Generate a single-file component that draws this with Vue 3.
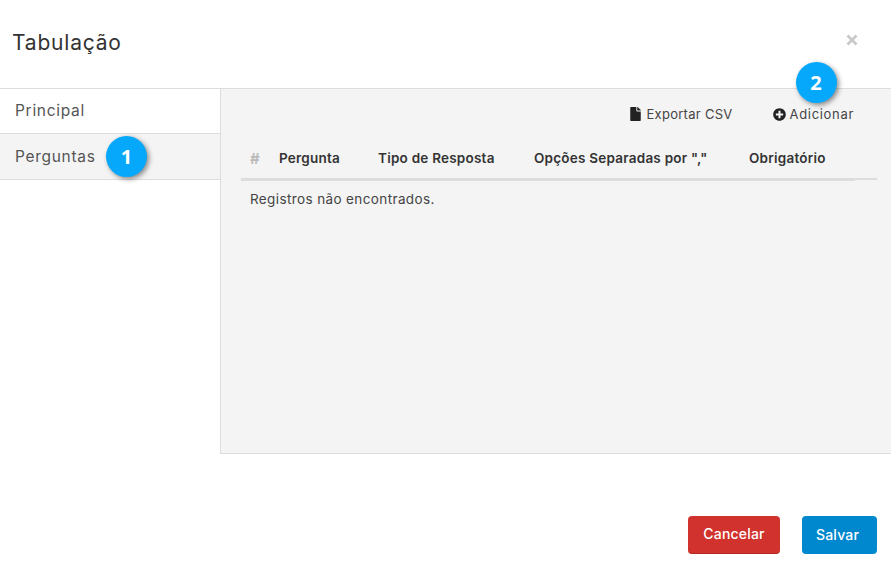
<script setup>
const columns = ['Pergunta', 'Tipo de Resposta', 'Opções Separadas por ","', 'Obrigatório']
</script>

<template>
  <div class="modal">
    <header class="head">
      <h1 class="title">Tabulação</h1>
      <svg class="close" viewBox="0 0 12 12" width="12" height="12" aria-label="Fechar">
        <path d="M1.5 1.5 10.5 10.5M10.5 1.5 1.5 10.5" />
      </svg>
    </header>
    <div class="body">
      <nav class="side">
        <a class="tab first">Principal</a>
        <a class="tab active">Perguntas<span class="badge one">1</span></a>
      </nav>
      <section class="panel">
        <div class="tools">
          <a class="tool">
            <svg viewBox="0 0 384 512" width="11" height="14"><path d="M224 136V0H24C10.700 0 0 10.700 0 24v464c0 13.300 10.700 24 24 24h336c13.300 0 24-10.700 24-24V160H248c-13.200 0-24-10.800-24-24zm160-14.100v6.100H256V0h6.100c6.400 0 12.500 2.500 17 7l97.900 98c4.500 4.500 7 10.600 7 16.900z"/></svg>
            Exportar CSV
          </a>
          <a class="tool add">
            <svg viewBox="0 0 512 512" width="13" height="13"><path d="M256 8C119 8 8 119 8 256s111 248 248 248 248-111 248-248S393 8 256 8zm144 276c0 6.600-5.400 12-12 12h-92v92c0 6.600-5.400 12-12 12h-56c-6.600 0-12-5.400-12-12v-92h-92c-6.600 0-12-5.400-12-12v-56c0-6.600 5.400-12 12-12h92v-92c0-6.600 5.400-12 12-12h56c6.600 0 12 5.400 12 12v92h92c6.600 0 12 5.400 12 12v56z"/></svg>
            Adicionar
            <span class="badge two">2</span>
          </a>
        </div>
        <div class="table">
          <div class="row-head">
            <span class="hash">#</span>
            <span v-for="c in columns" :key="c" class="col">{{ c }}</span>
          </div>
          <div class="rule"></div>
          <p class="empty">Registros não encontrados.</p>
        </div>
      </section>
    </div>
    <footer class="foot">
      <button class="btn red">Cancelar</button>
      <button class="btn blue">Salvar</button>
    </footer>
  </div>
</template>

<style>
html, body { margin: 0; background: #fff; }
</style>

<style scoped>
.modal {
  width: 891px;
  height: 569px;
  overflow: hidden;
  background: #fff;
  font-family: Inter, "Open Sans", sans-serif;
  color: #333;
}
.head {
  height: 89px;
  box-sizing: border-box;
  display: flex;
  align-items: flex-start;
  justify-content: space-between;
  padding: 0 33px 0 12px;
  border-bottom: 1px solid #ddd;
}
.title {
  margin: 29px 0 0;
  font-size: 21px;
  line-height: 28px;
  font-weight: 400;
  letter-spacing: 0.8px;
}
.close { margin-top: 34px; }
.close path { fill: none; stroke: #c9c9c9; stroke-width: 2.800px; }
.body {
  display: flex;
  height: 365px;
}
.side {
  width: 221px;
  box-sizing: border-box;
  border-right: 1px solid #ddd;
  flex: none;
}
.tab {
  display: flex;
  align-items: center;
  height: 45px;
  box-sizing: border-box;
  padding-left: 15px;
  font-size: 15.500px;
  color: #555;
  border-bottom: 1px solid #ddd;
  position: relative;
  letter-spacing: 0.7px;
}
.tab.first { padding-bottom: 2px; }
.tab.active { background: #f4f4f4; height: 46px; }
.panel {
  flex: 1;
  background: #f4f4f4;
  padding: 0 14px 0 20px;
  box-sizing: border-box;
  border-bottom: 1px solid #ddd;
}
.tools {
  height: 51px;
  display: flex;
  justify-content: flex-end;
  align-items: flex-start;
  gap: 40px;
  padding: 16px 23px 0 0;
  box-sizing: border-box;
}
.tool {
  display: inline-flex;
  align-items: center;
  gap: 5px;
  font-size: 13px;
  line-height: 18px;
  color: #444;
  position: relative;
  letter-spacing: 0.28px;
}
.tool svg { fill: #222; }
.tool.add { gap: 4px; letter-spacing: 0.68px; }
.table { color: #333; }
.row-head {
  display: grid;
  grid-template-columns: 29px 99px 156px 215px 1fr;
  align-items: center;
  height: 40px;
  box-sizing: border-box;
  padding: 0 0 2px 9px;
  border-bottom: 2px solid #ddd;
  font-size: 13.500px;
  font-weight: 600;
  letter-spacing: 0.23px;
  color: #333;
}
.rule { width: 614px; height: 1px; background: #ddd; }
.hash { color: #bbb; font-size: 15px; font-weight: 700; }
.col { white-space: nowrap; }
.empty {
  margin: 9px 0 0 9px;
  font-size: 13.500px;
  line-height: 18px;
  color: #444;
  letter-spacing: 0.38px;
}
.foot {
  display: flex;
  justify-content: flex-end;
  gap: 22px;
  padding: 62px 14px 0 0;
}
.btn {
  height: 38px;
  border: none;
  border-radius: 4px;
  color: #fff;
  font-family: inherit;
  font-size: 14px;
  font-weight: 500;
  letter-spacing: 0.2px;
  padding: 0 0 2px;
}
.red { width: 92px; background: #d1322d; border-bottom: 1px solid #b52a26; }
.blue { width: 75px; background: #0088cf; padding-right: 4px; }
.badge {
  position: absolute;
  width: 41px;
  height: 41px;
  border-radius: 50%;
  background: #06a8fb;
  color: #fff;
  font-family: "Open Sans", sans-serif;
  font-weight: 700;
  font-size: 20px;
  letter-spacing: 0;
  display: flex;
  align-items: center;
  justify-content: center;
  box-shadow: 2px 2px 5px rgba(0, 0, 0, 0.45);
}
.one { left: 106px; top: 2px; }
.two { left: 23px; top: -43px; }
</style>
